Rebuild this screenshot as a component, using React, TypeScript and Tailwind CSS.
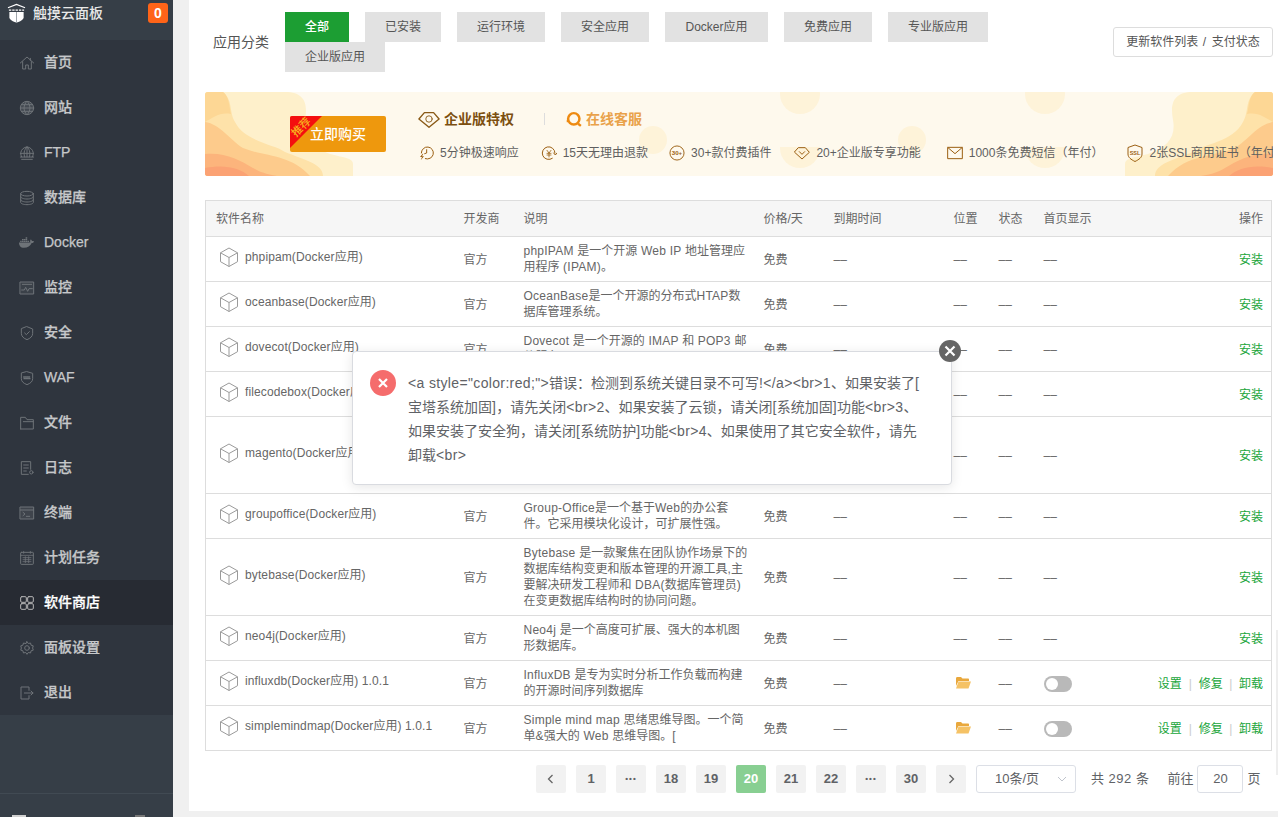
import React from "react";
import { FaDocker } from "react-icons/fa";

const S = ({ children, size = 16, vb = 24, className = "" }: { children: React.ReactNode; size?: number; vb?: number; className?: string }) => (
  <svg width={size} height={size} viewBox={`0 0 ${vb} ${vb}`} fill="none" stroke="currentColor" strokeWidth={1.5} strokeLinecap="round" strokeLinejoin="round" className={className}>{children}</svg>
);

// Latin runs are slightly wider in the reference than in Liberation Sans.
const T = ({ text, cls }: { text: string; cls: string }) => (
  <>
    {text.split(/([\x00-\x7f]+)/).map((part, i) =>
      i % 2 === 1 ? <span key={i} className={cls}>{part}</span> : <React.Fragment key={i}>{part}</React.Fragment>
    )}
  </>
);

const navIcons: Record<string, React.ReactNode> = {
  home: <S><path d="M2 12 12 3l10 9" /><path d="M5.500 10v11h4.500v-6h4v6h4.500V10" /><path d="M17 5v3" /></S>,
  web: <S><circle cx="12" cy="12" r="10" fill="currentColor" fillOpacity=".35" /><path d="M2 12h20M3.500 7h17M3.500 17h17M12 2c-6 5-6 15 0 20M12 2c6 5 6 15 0 20" /></S>,
  ftp: <S><path d="M4 18a9.500 9.500 0 1 1 16 0" /><path d="M2 12.500h20M12 3v15M12 3c-5 4-5 11-3.500 15M12 3c5 4 5 11 3.500 15M2 18h20M4 21.500h16" /></S>,
  db: <S><ellipse cx="12" cy="5.500" rx="9.500" ry="3.500" /><path d="M2.500 5.500v13c0 2 4.300 3.500 9.500 3.500s9.500-1.500 9.500-3.500v-13" /><path d="M2.500 10c0 2 4.300 3.500 9.500 3.500s9.500-1.500 9.500-3.500M2.500 14.500c0 2 4.300 3.500 9.500 3.500s9.500-1.500 9.500-3.500" /></S>,
  docker: <FaDocker size={15} />,
  monitor: <S><rect x="2" y="3" width="20" height="18" fill="currentColor" fillOpacity=".2" /><path d="M5 6.500h14M4 15h4l2-4 3 6 2-4h5" /></S>,
  safe: <S><path d="M12 2.500 20.500 6v6.500c0 4.500-3.500 7.500-8.500 9.500-5-2-8.500-5-8.500-9.500V6z" /><path d="m8.500 12 2.500 2.500 4.500-4.500" /></S>,
  waf: <S><path d="M12 2.500 20.500 5v8c0 4.500-3.500 7-8.500 9-5-2-8.500-4.500-8.500-9V5z" /><path d="M7 10.500h10M7.500 13h9" strokeWidth="2" strokeDasharray="1.500 1" /></S>,
  folder: <S><path d="M2.500 21V3.500h7l2.500 3.500h9.500v3" /><path d="M2.500 21h19v-11h-15" /></S>,
  log: <S><path d="M17.500 14V2.500h-14v19H14" /><path d="M7 7.500h7M7 12h7M7 16.500h4" /><circle cx="18.500" cy="18.500" r="2.500" /></S>,
  term: <S><rect x="2" y="3" width="20" height="18" fill="currentColor" fillOpacity=".25" /><path d="M2 7.500h20M6 11l3 2.500L6 16M11 17h5" /></S>,
  plan: <S><rect x="2.500" y="3.500" width="19" height="18" rx="1" /><path d="M2.500 8h19M7 2v3M17 2v3M6 11.500h12M6 14.500h12M6 17.500h12M9.500 10v9M14.500 10v9" strokeWidth="1.200" /></S>,
  store: <S><rect x="2.500" y="2.500" width="8.500" height="8.500" rx="1.800" /><rect x="13" y="2.500" width="8.500" height="8.500" rx="1.800" /><rect x="2.500" y="13" width="8.500" height="8.500" rx="1.800" /><rect x="13" y="13" width="8.500" height="8.500" rx="1.800" /></S>,
  gear: <S><circle cx="12" cy="12" r="3.500" /><path d="M12 2.500l2 2.800 3.300-.8.800 3.300 3.300 1-1 3.200 1 3.200-3.300 1-.8 3.300-3.300-.8-2 2.800-2-2.800-3.300.8-.8-3.300-3.300-1 1-3.200-1-3.200 3.300-1 .8-3.300 3.300.8z" /></S>,
  exit: <S><path d="M15 8V3H3v18h12v-5" /><path d="M8 12h13M18 9l3 3-3 3" /></S>,
};

const nav: [string, string][] = [
  ["home", "首页"], ["web", "网站"], ["ftp", "FTP"], ["db", "数据库"], ["docker", "Docker"],
  ["monitor", "监控"], ["safe", "安全"], ["waf", "WAF"], ["folder", "文件"], ["log", "日志"],
  ["term", "终端"], ["plan", "计划任务"], ["store", "软件商店"], ["gear", "面板设置"], ["exit", "退出"],
];

const Sidebar = () => (
  <aside className="flex h-full w-[173px] shrink-0 flex-col bg-[#363e47]">
    <div className="relative flex h-[40px] shrink-0 items-start pl-[7px] pt-[3px]">
      <svg width="19" height="20" viewBox="0 0 20 20" className="text-white">
        <path d="M1 4.500 10 1l9 3.500" stroke="currentColor" strokeWidth="1.200" fill="none" />
        <path d="M2 7h16" stroke="currentColor" strokeWidth="1.500" strokeDasharray="2.500 1" />
        <path d="M2.500 9h15v5.500c0 2.500-4 5-7.500 5.500-3.500-.5-7.500-3-7.500-5.500z" fill="currentColor" />
        <path d="M10 9v11" stroke="#9aa0a6" strokeWidth="1" />
      </svg>
      <span className="ml-[7px] text-[14px] leading-[20px] font-medium text-[#e8e8e8]">触摸云面板</span>
      <span className="absolute left-[148px] top-[3px] flex h-[20px] w-[20px] items-center justify-center rounded-[3px] bg-[#ff6418] text-[14px] font-bold text-white">0</span>
    </div>
    <nav className="flex shrink-0 flex-col bg-[#2f353e]">
      {nav.map(([k, label]) => {
        const active = k === "store";
        return (
          <div key={k} className={`flex h-[45px] items-center pl-[19px] ${active ? "bg-[#272b33]" : ""}`}>
            <span className={`flex w-[25px] ${active ? "text-[#b5b5b5]" : "text-[#6e7378]"}`}>{navIcons[k]}</span>
            <span className={`text-[14px] font-medium [-webkit-text-stroke:0.25px] ${active ? "text-white" : "text-[#c6c8ca]"}`}>{label}</span>
          </div>
        );
      })}
    </nav>
    <div className="flex-1" />
    <div className="flex h-[24px] shrink-0 items-end justify-between border-t border-[#414a53] pl-[12px] pr-[28px]">
      <span className="h-[2px] w-[14px] bg-[#d0d0d0]" />
      <span className="h-[2px] w-[10px] bg-[#777]" />
    </div>
  </aside>
);

const cats = ["全部", "已安装", "运行环境", "安全应用", "Docker应用", "免费应用", "专业版应用", "企业版应用"];
const catW = ["w-[64px]", "w-[76px]", "w-[88px]", "w-[88px]", "w-[103px]", "w-[88px]", "w-[100px]", "w-[100px]"];

const FilterBar = () => (
  <div className="flex items-start pl-[24px] pr-[5px]">
    <span className="mt-[21px] w-[72px] shrink-0 text-[14px] leading-[18px] text-[#555]">应用分类</span>
    <div className="flex w-[720px] flex-wrap gap-x-4">
      {cats.map((c, i) => (
        <span key={c} className={`flex h-[30px] items-center justify-center text-[12px] ${catW[i]} ${i === 0 ? "bg-[#1c9e33] font-medium text-white" : "bg-[#e2e2e2] text-[#555]"}`}>{c}</span>
      ))}
    </div>
    <button className="ml-auto mt-[15px] h-[30px] w-[160px] rounded-[3px] border border-[#ddd] bg-white text-[12px] text-[#555]"><T text="更新软件列表 / 支付状态" cls="tracking-[1.2px]" /></button>
  </div>
);

const BannerArt = ({ flip = false }: { flip?: boolean }) => (
  <svg width="148" height="84" viewBox="0 0 148 84" className={`absolute bottom-0 ${flip ? "right-0 -scale-x-100" : "left-0"}`}>
    <path d="M0 0H80C100 0 103 12 100 28C97 45 105 55 125 62C140 66 148 66 148 72V84H0Z" fill="#fef0cb" />
    <path d="M0 0H18C28 8 24 20 30 30C40 50 70 52 80 60C100 68 118 72 118 84H0Z" fill="#fee2a9" />
    <path d="M0 30C15 32 25 48 38 56C60 65 85 62 105 84H0Z" fill="#fdcb8c" />
    <path d="M0 62C20 60 35 68 48 76C55 80 60 82 72 84H0Z" fill="#fcb47c" />
    <path d="M0 76C20 72 35 76 44 84H0Z" fill="#fba274" />
    <path d="M0 0H18C24 4 24 14 26 22C14 20 8 26 0 30Z" fill="#fdd795" />
  </svg>
);

const bi = "shrink-0 text-[#9b5f12]";
const feats: [React.ReactNode, string, string][] = [
  [<S size={16} className={bi}><path d="M5 12a9 9 0 1 1 6 8.500" /><path d="M13 7v5l-3 1" /><path d="M7 13l-4 5h3l-2 5 5-6H6l2-4z" fill="currentColor" stroke="none" /></S>, "5分钟极速响应", "mr-[1px]"],
  [<S size={16} className={bi}><path d="M21 12a9.500 9.500 0 1 0-4 8" /><path d="M19 12l2.500 3 2.500-3" /><path d="M9 8l3 4 3-4M9 12.500h6M9 15h6M12 12v6" strokeWidth="1.200" /></S>, "15天无理由退款", ""],
  [<svg width="16" height="16" viewBox="0 0 17 17" className={bi}><circle cx="8.500" cy="8.500" r="7.500" fill="none" stroke="currentColor" /><text x="8.500" y="11" textAnchor="middle" fontSize="6.500" fontWeight="700" fill="currentColor" fontFamily="Liberation Sans">30+</text></svg>, "30+款付费插件", "mr-[2px]"],
  [<S size={16} className={bi}><path d="M7 4h10l6 7-11 10L1 11z" /><path d="m8 10 4 4 4-4" /></S>, "20+企业版专享功能", "mr-[5px]"],
  [<S size={16} className={bi}><rect x="1" y="3.500" width="22" height="17" strokeLinecap="butt" /><path d="m1.500 4 10.500 9 10.500-9" /></S>, "1000条免费短信（年付）", "mr-[3px]"],
  [<svg width="16" height="18" viewBox="0 0 16 18" className={bi}><path d="M8 1 15 3.500V10c0 3.500-3 5.500-7 7.500C4 15.500 1 13.500 1 10V3.500z" fill="none" stroke="currentColor" /><text x="8" y="11" textAnchor="middle" fontSize="5.500" fontWeight="700" fill="currentColor" fontFamily="Liberation Sans">SSL</text></svg>, "2张SSL商用证书（年付）", ""],
];

const Banner = () => (
  <div className="relative ml-[16px] mr-[5px] mt-5 flex h-[84px] overflow-hidden rounded-[3px] bg-[#fef9ed]">
    <BannerArt />
    <span className="absolute left-[434px] top-[34px] h-[28px] w-[28px] rounded-full bg-[#fef3d9]" />
    <span className="absolute left-[575px] top-[-18px] h-[40px] w-[40px] rounded-full bg-[#fef3d9]" />
    <span className="absolute left-[693px] top-[34px] h-[28px] w-[28px] rounded-full bg-[#fef3d9]" />
    <span className="absolute left-[575px] top-[55px] h-[21px] w-[40px] rounded-b-full bg-[#fef3d9]" />
    <span className="absolute left-[820px] top-[-18px] h-[40px] w-[40px] rounded-full bg-[#fef3d9]" />
    <span className="absolute left-[820px] top-[55px] h-[21px] w-[40px] rounded-b-full bg-[#fef3d9]" />
    <BannerArt flip />
    <div className="relative ml-[85px] mt-[24px] flex h-[36px] w-[96px] shrink-0 items-center justify-center overflow-hidden rounded-[2px] bg-[#ee980d] text-[14px] font-medium text-white">
      立即购买
      <span className="absolute left-0 top-0 h-[32px] w-[32px] bg-[#f40f0f] [clip-path:polygon(0_0,100%_0,0_100%)]" />
      <span className="absolute left-[0px] top-[4px] -rotate-45 text-[11px] leading-[14px] text-[#f8b21e]">推荐</span>
    </div>
    <div className="relative ml-[32px] flex flex-col whitespace-nowrap">
      <div className="mt-[16px] flex h-[22px] items-center">
        <S size={22} className="text-[#8a5a16]"><path d="M7 5h10l6 7-11 9L1 12z" /><circle cx="12" cy="12" r="3.500" strokeWidth="1" /></S>
        <span className="ml-[4px] text-[14px] font-bold text-[#7c4f10]">企业版特权</span>
        <span className="ml-[30px] h-[12px] w-px bg-[#ddd]" />
        <svg width="17" height="17" viewBox="0 0 24 24" className="ml-[21px] text-[#ee8b12]" fill="none" stroke="currentColor" strokeWidth="3.500"><circle cx="11" cy="11" r="8" /><path d="M4 14H1M17 18l4 3" /></svg>
        <span className="ml-[3px] text-[14px] font-bold text-[#e9a24a]">在线客服</span>
      </div>
      <div className="mt-[13px] flex h-[20px] items-center gap-[21px]">
        {feats.map(([ic, t, m]) => (
          <span key={t} className={`flex items-center gap-[6px] text-[12px] text-[#5f5f5f] ${m}`}>{ic}{t}</span>
        ))}
      </div>
    </div>
  </div>
);

type Row = { name: string; desc: string[]; installed?: boolean };
const rows: Row[] = [
  { name: "phpipam(Docker应用)", desc: ["phpIPAM 是一个开源 Web IP 地址管理应", "用程序 (IPAM)。"] },
  { name: "oceanbase(Docker应用)", desc: ["OceanBase是一个开源的分布式HTAP数", "据库管理系统。"] },
  { name: "dovecot(Docker应用)", desc: ["Dovecot 是一个开源的 IMAP 和 POP3 邮", "件服务器。"] },
  { name: "filecodebox(Docker应用)", desc: ["FileCodeBox 是一个文件快递柜，可匿名", "分享文本和文件。"] },
  { name: "magento(Docker应用)", desc: ["Magento 是一个开源的电子商务平台，提", "供灵活的购物车系统，", "可以完全控制在线商店的", "外观和功能。"] },
  { name: "groupoffice(Docker应用)", desc: ["Group-Office是一个基于Web的办公套", "件。它采用模块化设计，可扩展性强。"] },
  { name: "bytebase(Docker应用)", desc: ["Bytebase 是一款聚焦在团队协作场景下的", "数据库结构变更和版本管理的开源工具,主", "要解决研发工程师和 DBA(数据库管理员)", "在变更数据库结构时的协同问题。"] },
  { name: "neo4j(Docker应用)", desc: ["Neo4j 是一个高度可扩展、强大的本机图", "形数据库。"] },
  { name: "influxdb(Docker应用) 1.0.1", desc: ["InfluxDB 是专为实时分析工作负载而构建", "的开源时间序列数据库"], installed: true },
  { name: "simplemindmap(Docker应用) 1.0.1", desc: ["Simple mind map 思绪思维导图。一个简", "单&强大的 Web 思维导图。["], installed: true },
];

const Cube = () => (
  <svg width="20" height="20" viewBox="0 0 20 20" fill="none" stroke="#9a9a9a" strokeWidth="1" strokeLinejoin="round" className="shrink-0">
    <path d="M10 1 18.500 5.800v8.900L10 19.500 1.500 14.700V5.800z" />
    <path d="M1.500 5.800 10 10.500l8.500-4.700M10 10.500v9" />
  </svg>
);

const thc = "h-[36px] px-[12px] text-left font-normal whitespace-nowrap";
const tdc = "px-[12px] pt-[7px] pb-[5px] align-middle";
const dash = "––";

const Table = () => (
  <div className="mx-[16px] mt-6 w-[1067px]">
    <table className="w-full table-fixed border-collapse border border-[#ddd] text-[12px] leading-[16px] text-[#666]">
      <colgroup>
        <col className="w-[246px]" /><col className="w-[60px]" /><col className="w-[240px]" /><col className="w-[70px]" />
        <col className="w-[120px]" /><col className="w-[45px]" /><col className="w-[45px]" /><col className="w-[90px]" /><col />
      </colgroup>
      <thead>
        <tr className="bg-[#f6f6f6] text-[#666]">
          {["软件名称", "开发商", "说明", "价格/天", "到期时间", "位置", "状态", "首页显示"].map((h) => <th key={h} className={`${thc} ${h === "软件名称" ? "!pl-[10px]" : ""}`}>{h}</th>)}
          <th className={`${thc} pr-[8px] text-right`}>操作</th>
        </tr>
      </thead>
      <tbody>
        {rows.map((r) => (
          <tr key={r.name} className="border-t border-[#ddd]">
            <td className="px-[12px] py-0 align-middle">
              <div className="-mt-[5px] ml-[1px] flex items-center gap-[6px] whitespace-nowrap"><Cube /><span><T text={r.name} cls="tracking-[0.12px]" /></span></div>
            </td>
            <td className={tdc}>官方</td>
            <td className="whitespace-nowrap py-[6px] pl-[12px] align-middle">{r.desc.map((l) => <div key={l}><T text={l} cls="tracking-[0.25px]" /></div>)}</td>
            <td className={tdc}>免费</td>
            <td className={tdc}>{dash}</td>
            <td className={tdc}>
              {r.installed ? (
                <svg width="16" height="13" viewBox="0 0 16 13" className="ml-[1px] -mt-[4px]"><path d="M1 2.500C1 1.500 1.500 1 2.500 1h3.500l1.500 1.500H13c.6 0 1 .4 1 1V5H3.500L1 10z" fill="#e9a83d" /><path d="M3.500 5.500H16L13.500 12.500H1z" fill="#f5c265" /></svg>
              ) : dash}
            </td>
            <td className={tdc}>{dash}</td>
            <td className={tdc}>
              {r.installed ? (
                <span className="flex h-[16px] w-[28px] items-center rounded-full bg-[#b9b9b9] pl-[2px]"><span className="h-[12px] w-[12px] rounded-full bg-white" /></span>
              ) : dash}
            </td>
            <td className={`${tdc} !pr-[8px] whitespace-nowrap text-right text-[#20a53a]`}>
              {r.installed ? (
                <>设置<span className="mx-[7px] text-[#ccc]">|</span>修复<span className="mx-[6.500px] text-[#ccc]">|</span>卸载</>
              ) : "安装"}
            </td>
          </tr>
        ))}
      </tbody>
    </table>
  </div>
);

const Chevron = ({ d }: { d: string }) => (
  <svg width="12" height="12" viewBox="0 0 12 12" fill="none" stroke="#666" strokeWidth="1.300"><path d={d} /></svg>
);

const pageBtn = "flex h-[28px] w-[30px] items-center justify-center rounded-[2px] bg-[#f2f2f2] text-[13px] font-bold text-[#606266]";
const pages = ["1", "•••", "18", "19", "20", "21", "22", "•••", "30"];

const Pagination = () => (
  <div className="mt-[14px] flex items-center pl-[347px] text-[13px] text-[#606266]">
    <div className="flex gap-[10px]">
      <span className={pageBtn}><Chevron d="M7.500 2 3.500 6l4 4" /></span>
      {pages.map((p, i) => (
        <span key={i} className={`${pageBtn} ${p === "20" ? "!bg-[#88cf92] text-white" : ""} ${p === "•••" ? "!text-[8px] tracking-[1px]" : ""}`}>{p}</span>
      ))}
      <span className={pageBtn}><Chevron d="M4.500 2l4 4-4 4" /></span>
    </div>
    <div className="ml-[10px] flex h-[28px] w-[100px] items-center rounded-[3px] border border-[#dcdfe6] pl-[18px] pr-[8px]">
      10条/页
      <svg width="10" height="10" viewBox="0 0 10 10" className="ml-auto" fill="none" stroke="#c0c4cc"><path d="m1 3 4 4 4-4" /></svg>
    </div>
    <span className="ml-[15px] tracking-[0.5px]">共 292 条</span>
    <span className="ml-[18px]">前往</span>
    <span className="ml-[4px] flex h-[28px] w-[46px] items-center justify-center rounded-[3px] border border-[#dcdfe6]">20</span>
    <span className="ml-[4px]">页</span>
  </div>
);

const dialogLines = [
  '<a style="color:red;">错误：检测到系统关键目录不可写!</a><br>1、如果安装了[',
  "宝塔系统加固]，请先关闭<br>2、如果安装了云锁，请关闭[系统加固]功能<br>3、",
  "如果安装了安全狗，请关闭[系统防护]功能<br>4、如果使用了其它安全软件，请先",
  "卸载<br>",
];

const Dialog = () => (
  <div className="absolute left-[163px] top-[351px] h-[134px] w-[600px] rounded-[4px] border border-[#d9dbe0] bg-white pl-[17px] pt-[18px] shadow-[0_2px_12px_rgba(0,0,0,0.1)]">
    <div className="flex">
      <span className="flex h-[26px] w-[26px] shrink-0 items-center justify-center rounded-full bg-[#f56c6c]">
        <svg width="12" height="12" viewBox="0 0 12 12" stroke="#fff" strokeWidth="2.200"><path d="m2 2 8 8M10 2l-8 8" /></svg>
      </span>
      <div className="ml-[12px] mt-[1px] whitespace-nowrap text-[14px] leading-[24px] text-[#606266]">
        {dialogLines.map((l) => <div key={l}><T text={l} cls="tracking-[0.35px]" /></div>)}
      </div>
    </div>
    <span className="absolute right-[-10px] top-[-12px] flex h-[22px] w-[22px] items-center justify-center rounded-full bg-[#666]">
      <svg width="12" height="12" viewBox="0 0 12 12" stroke="#fff" strokeWidth="2.200"><path d="m1.500 1.500 9 9M10.500 1.500l-9 9" /></svg>
    </span>
  </div>
);

export default function App() {
  return (
    <div className="flex h-screen w-full overflow-hidden bg-[#f0f0f0] font-['Liberation_Sans','Noto_Sans_CJK_SC',sans-serif]">
      <Sidebar />
      <main className="relative ml-[16px] h-[811px] min-w-0 flex-1 bg-white pt-[12px]">
        <FilterBar />
        <Banner />
        <Table />
        <Pagination />
        <Dialog />
        <span className="absolute right-0 top-[630px] h-[145px] w-[2px] bg-[#eee]" />
      </main>
    </div>
  );
}
